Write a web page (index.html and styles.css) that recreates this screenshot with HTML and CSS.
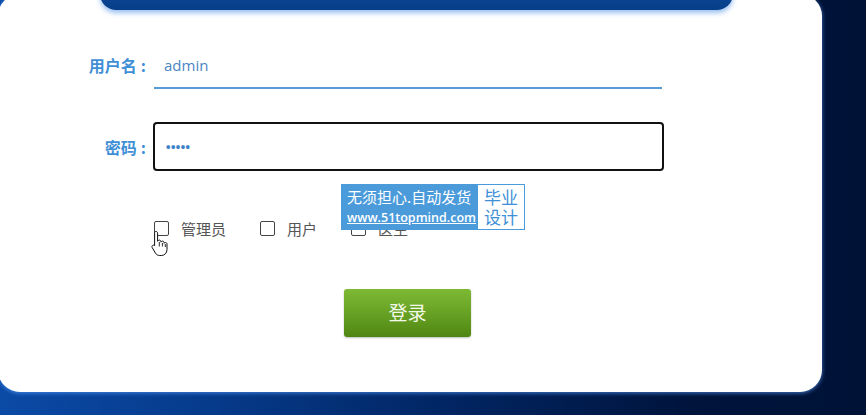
FILE: index.html
```html
<!DOCTYPE html>
<html lang="zh-CN">
<head>
  <meta charset="UTF-8" />
  <title>登录</title>
  <link rel="stylesheet" href="styles.css">
</head>
<body>
  <div class="card">
    <div class="topbar"></div>
    <form class="login-form">
      <div class="field">
        <label class="field-label" for="username">用户名<span class="colon">:</span></label>
        <input class="field-user" type="text" id="username" value="admin" />
      </div>
      <div class="field field-gap">
        <label class="field-label" for="password">密码<span class="colon">:</span></label>
        <input class="field-pass" type="password" id="password" value="admin" />
      </div>
      <div class="roles">
        <label class="role"><input type="checkbox" /> 管理员</label>
        <label class="role"><input type="checkbox" /> 用户</label>
        <label class="role"><input type="checkbox" /> 医生</label>
        <svg class="cursor" width="18" height="26" viewBox="0 0 18 26">
          <path d="M5 1.5c1 0 1.6.7 1.6 1.6v8.2c.3-.8 1-1.2 1.7-1.2 1 0 1.6.7 1.6 1.6v.4c.3-.6.9-1 1.6-1 1 0 1.6.7 1.6 1.6v.6c.3-.5.8-.8 1.4-.8.9 0 1.5.7 1.5 1.6v5.5c0 3.4-2.4 5.9-5.6 5.9H8.8c-2 0-3.3-.8-4.4-2.4L1.2 17.6c-.5-.8-.3-1.7.4-2.2.7-.5 1.6-.3 2.1.4l-.1-.1V3.1C3.4 2.2 4 1.5 5 1.5z" fill="#fff" stroke="#111" stroke-width="1"/>
          <path d="M8.3 12v4.5M11.4 13v3.5M14.3 14v3" stroke="#111" stroke-width="0.9" fill="none"/>
        </svg>
      </div>
      <button class="login-btn" type="button">登录</button>
    </form>
    <div class="promo">
      <div class="promo-text">
        <span class="promo-title">无须担心.自动发货</span>
        <span class="promo-url">www.51topmind.com</span>
      </div>
      <div class="promo-tag">毕业<br>设计</div>
    </div>
  </div>
</body>
</html>
```

FILE: styles.css
```css
body {
  margin: 0;
  height: 415px;
  overflow: hidden;
  font-family: "Noto Sans CJK SC", "Noto Sans", sans-serif;
  background: linear-gradient(90deg, #0b4aa6 0%, #063a8a 25%, #01235e 55%, #00143c 80%, #001236 100%);
}
.card {
  position: relative;
  width: 824px;
  height: 398px;
  margin: -6px 0 0 -2px;
  background: #fff;
  border-radius: 22px;
  box-shadow: 0 1px 4px rgba(90, 160, 255, 0.7);
}
.topbar {
  width: 633px;
  height: 16px;
  margin-left: 102px;
  background: linear-gradient(180deg, #0b4795 0%, #073e88 100%);
  border-radius: 0 0 16px 16px;
  box-shadow: 0 3px 5px rgba(70, 140, 230, 0.55);
}
.login-form {
  display: flex;
  flex-direction: column;
  margin-top: 30px;
}
.field {
  display: flex;
  align-items: center;
  gap: 8px;
}
.field-gap {
  margin-top: 33px;
}
.field-label {
  width: 148px;
  text-align: right;
  font-size: 16px;
  font-weight: bold;
  color: #3f8fd6;
}
.colon {
  margin-left: 4px;
}
.field-user, .field-pass {
  box-sizing: border-box;
  width: 508px;
  height: 49px;
  padding: 0 10px;
  font-family: "Open Sans", "Noto Sans", sans-serif;
  font-size: 15px;
  color: #4a86c4;
  background: #fff;
  outline: none;
}
.field-user {
  border: none;
  border-bottom: 2px solid #5b9bd5;
  padding-top: 2px;
}
.field-pass {
  width: 511px;
  margin-left: -1px;
  border: 2px solid #111;
  border-radius: 4px;
  font-size: 17px;
  letter-spacing: -1.5px;
  color: #3c82c8;
}
.roles {
  position: relative;
  display: flex;
  align-items: center;
  height: 16px;
  margin: 49px 0 0 156px;
  font-size: 15px;
  color: #555;
}
.role {
  display: flex;
  align-items: center;
  gap: 12px;
  margin-right: 34px;
}
.role input {
  appearance: none;
  width: 15px;
  height: 15px;
  margin: 0;
  border: 1px solid #444;
  border-radius: 2px;
  background: #fff;
}
.cursor {
  position: absolute;
  left: -3px;
  top: 10px;
}
.login-btn {
  width: 127px;
  height: 48px;
  margin: 53px 0 0 346px;
  padding-bottom: 5px;
  border: none;
  border-radius: 3px;
  background: linear-gradient(180deg, #7db934 0%, #68a224 50%, #4f8612 100%);
  box-shadow: 0 1px 2px rgba(0, 0, 0, 0.25);
  color: #f3f9ea;
  font-family: "Noto Sans CJK SC", sans-serif;
  font-size: 19px;
}
.promo {
  position: absolute;
  left: 343px;
  top: 190px;
  display: flex;
  height: 46px;
  background: #4b9bdb;
}
.promo-text {
  display: flex;
  flex-direction: column;
  justify-content: center;
  width: 126px;
  padding: 0 4px 0 6px;
  color: #fff;
  line-height: 21px;
}
.promo-title {
  font-size: 15px;
  letter-spacing: 0;
}
.promo-url {
  font-family: "Open Sans", "Noto Sans", sans-serif;
  font-size: 12.5px;
  font-weight: 600;
  text-decoration: underline;
  letter-spacing: 0;
}
.promo-tag {
  box-sizing: border-box;
  width: 48px;
  height: 46px;
  border: 1px solid #4b9bdb;
  background: #fff;
  color: #3f8fd6;
  font-size: 17px;
  line-height: 20px;
  text-align: center;
  padding-top: 2px;
}
```
